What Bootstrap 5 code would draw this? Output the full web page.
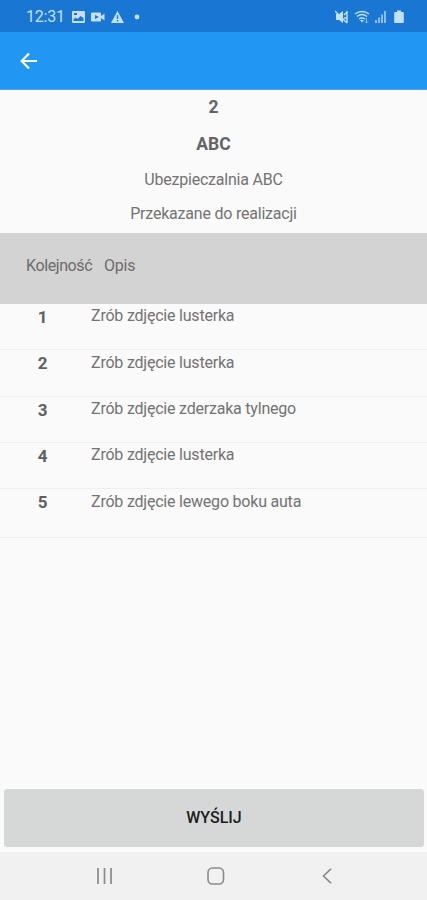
<!DOCTYPE html>
<html lang="pl">
<head>
<meta charset="utf-8">
<meta name="viewport" content="width=device-width, initial-scale=1">
<title>Ubezpieczalnia ABC</title>
<link href="https://cdn.jsdelivr.net/npm/bootstrap@5.3.0/dist/css/bootstrap.min.css" rel="stylesheet">
<style>
body { font-family: Roboto, sans-serif; font-size: 16px; letter-spacing: -.21px; line-height: 24px; color: #737373; background: #fafafa; height: 900px; overflow: hidden; }
.status { height: 32px; background: #1976d2; color: #c4e0f8; padding: 1px 23px 0 26px; }
.status svg, .appbar svg, .sysnav svg { display: block; flex: none; }
.clock { width: 46px; white-space: nowrap; }
.appbar { height: 58px; background: #2196f3; padding-left: 20px; border-bottom: 1px solid #46a8f5; }
.summary { height: 143px; padding-top: 5px; }
.summary .strong-line { height: 37px; color: #646464; font-size: 17.5px; letter-spacing: 0; }
.summary .strong-line + .plain-line { margin-top: -1px; }
.summary .plain-line { height: 34px; }
.heads { height: 71px; background: #d3d3d3; padding: 0 26px 6px; color: #6c6c6c; }
.heads .order { width: 78px; letter-spacing: -.4px; }
.task { height: 46.3px; border-bottom: 1px solid #eeeeee; padding-top: .4px; }
.task:last-child { height: 49px; }
.task .num { width: 85px; margin-right: 6px; padding-top: .6px; color: #606060; font-size: 17px; }
.send { height: 58px; margin: 0 3px 5px 4px; background: #d6d8d7; color: #1c1c1c; border-radius: 3px; border: 0; font-size: 16px; font-weight: 500; letter-spacing: 0; }
.sysnav { height: 48px; background: #f1f1f1; padding: 0 95px 0 96px; }
.sysnav .home { margin-right: 3px; }
</style>
</head>
<body class="d-flex flex-column">
<header>
  <div class="status d-flex align-items-center">
    <span class="clock">12:31</span>
    <svg width="70" height="16" viewBox="0 0 70 16" fill="currentColor">
      <path fill-rule="evenodd" d="M1 2h11q1 0 1 1v10q0 1-1 1H1q-1 0-1-1V3q0-1 1-1zM1.500 12h10V9l-3-2-3 3-2-1.500-2 2zM2 4v2h3V4z"/>
      <path fill-rule="evenodd" d="M20 3.500h8q1 0 1 1V7l3.500-2.500v7L29 9v2.500q0 1-1 1h-8q-1 0-1-1v-7q0-1 1-1zM23 6v4l4-2z"/>
      <path fill-rule="evenodd" d="M45.500 2 52 14H39zM44.800 6v4h1.400V6zM44.800 11v1.500h1.400V11z"/>
      <circle cx="65" cy="8" r="2.400"/>
    </svg>
    <svg class="ms-auto" width="69" height="16" viewBox="0 0 69 16" fill="none" stroke="currentColor" stroke-width="1.400">
      <path d="M1 5h3l4-3v12l-4-3H1z" fill="currentColor" stroke="none"/>
      <path d="M0 2l12 12M9 6l3-3M9 9h3M12 2v12"/>
      <path d="M20 5q7-5 14 0M22 7.500q5-4 10 0M24 10q3-2 6 0"/>
      <path d="M25 11h4l-2 2.500z" fill="currentColor" stroke="none"/>
      <path d="M31.500 9v5M30 12.500l1.500 1.500 1.500-1.500" stroke-width=".9" opacity=".7"/>
      <path d="M41 11v3M44 8.500V14M47 5.500V14" stroke-width="1.800" opacity=".75"/>
      <path d="M50 2v12" stroke-width="1.300"/>
      <path d="M60 3h2V1.500h4V3h2q.8 0 .8.800v9.400q0 .8-.8.800h-8q-.8 0-.8-.8V3.800q0-.8.800-.8z" fill="currentColor" stroke="none"/>
    </svg>
  </div>
  <nav class="appbar d-flex align-items-center" aria-label="Nawigacja">
    <svg width="18" height="18" viewBox="0 0 18 18" fill="none" stroke="#fff" stroke-width="2.200"><path d="M17 9H2.500M9 1.500 1.700 9 9 16.500"/></svg>
  </nav>
</header>
<main class="flex-grow-1">
  <section class="summary text-center">
    <div class="strong-line fw-bold">2</div>
    <div class="strong-line fw-bold">ABC</div>
    <div class="plain-line">Ubezpieczalnia ABC</div>
    <div class="plain-line">Przekazane do realizacji</div>
  </section>
  <section>
    <div class="heads d-flex align-items-center"><span class="order">Kolejność</span><span>Opis</span></div>
    <div class="task d-flex"><span class="num fw-bold text-center">1</span><span>Zrób zdjęcie lusterka</span></div>
    <div class="task d-flex"><span class="num fw-bold text-center">2</span><span>Zrób zdjęcie lusterka</span></div>
    <div class="task d-flex"><span class="num fw-bold text-center">3</span><span>Zrób zdjęcie zderzaka tylnego</span></div>
    <div class="task d-flex"><span class="num fw-bold text-center">4</span><span>Zrób zdjęcie lusterka</span></div>
    <div class="task d-flex"><span class="num fw-bold text-center">5</span><span>Zrób zdjęcie lewego boku auta</span></div>
  </section>
</main>
<button class="send btn p-0" type="button">WYŚLIJ</button>
<footer class="sysnav d-flex align-items-center justify-content-between">
  <svg width="17" height="16" viewBox="0 0 17 16" stroke="#8a8a8a" stroke-width="1.700"><path d="M2 0v16M8.500 0v16M15 0v16"/></svg>
  <svg class="home" width="18" height="18" viewBox="0 0 18 18" fill="none" stroke="#8a8a8a" stroke-width="1.600"><rect x="1" y="1" width="15.500" height="16" rx="4.500"/></svg>
  <svg width="10" height="16" viewBox="0 0 10 16" fill="none" stroke="#8a8a8a" stroke-width="1.700"><path d="M9 .8 1.500 8 9 15.200"/></svg>
</footer>
<script src="https://cdn.jsdelivr.net/npm/bootstrap@5.3.0/dist/js/bootstrap.bundle.min.js"></script>
</body>
</html>
